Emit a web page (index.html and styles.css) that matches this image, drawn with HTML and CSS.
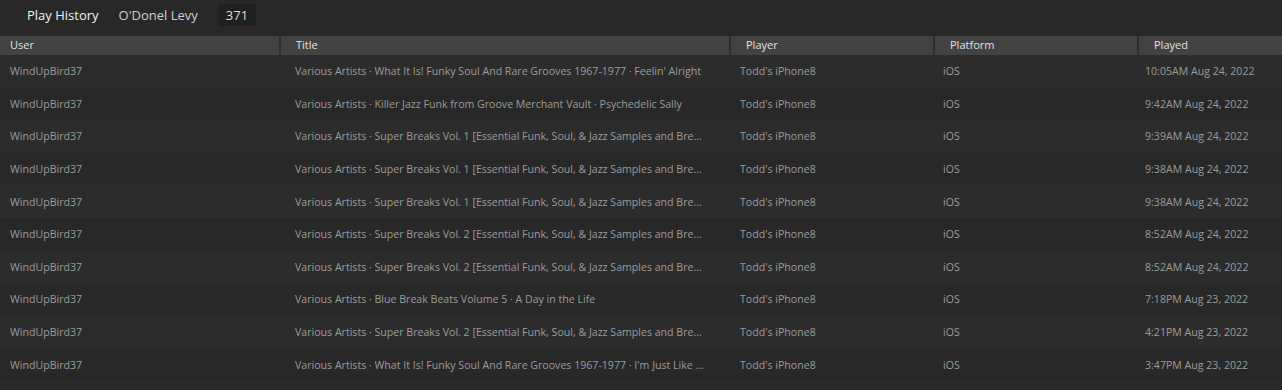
FILE: index.html
```html
<!DOCTYPE html>
<html>
<head>
<meta charset="utf-8">
<link rel="stylesheet" href="styles.css">
</head>
<body>
<div class="topbar">
  <span class="title">Play History</span>
  <span class="user">O'Donel Levy</span>
  <span class="count">371</span>
</div>
<div class="thead">
  <div class="th first">User</div>
  <div class="th">Title</div>
  <div class="th">Player</div>
  <div class="th">Platform</div>
  <div class="th">Played</div>
</div>
<div class="tbody">
  <div class="tr"><div class="td">WindUpBird37</div><div class="td">Various Artists · What It Is! Funky Soul And Rare Grooves 1967-1977 · Feelin' Alright</div><div class="td">Todd's iPhone8</div><div class="td">iOS</div><div class="td">10:05AM Aug 24, 2022</div></div>
  <div class="tr"><div class="td">WindUpBird37</div><div class="td">Various Artists · Killer Jazz Funk from Groove Merchant Vault · Psychedelic Sally</div><div class="td">Todd's iPhone8</div><div class="td">iOS</div><div class="td">9:42AM Aug 24, 2022</div></div>
  <div class="tr"><div class="td">WindUpBird37</div><div class="td">Various Artists · Super Breaks Vol. 1 [Essential Funk, Soul, &amp; Jazz Samples and Breaks]</div><div class="td">Todd's iPhone8</div><div class="td">iOS</div><div class="td">9:39AM Aug 24, 2022</div></div>
  <div class="tr"><div class="td">WindUpBird37</div><div class="td">Various Artists · Super Breaks Vol. 1 [Essential Funk, Soul, &amp; Jazz Samples and Breaks]</div><div class="td">Todd's iPhone8</div><div class="td">iOS</div><div class="td">9:38AM Aug 24, 2022</div></div>
  <div class="tr"><div class="td">WindUpBird37</div><div class="td">Various Artists · Super Breaks Vol. 1 [Essential Funk, Soul, &amp; Jazz Samples and Breaks]</div><div class="td">Todd's iPhone8</div><div class="td">iOS</div><div class="td">9:38AM Aug 24, 2022</div></div>
  <div class="tr"><div class="td">WindUpBird37</div><div class="td">Various Artists · Super Breaks Vol. 2 [Essential Funk, Soul, &amp; Jazz Samples and Breaks]</div><div class="td">Todd's iPhone8</div><div class="td">iOS</div><div class="td">8:52AM Aug 24, 2022</div></div>
  <div class="tr"><div class="td">WindUpBird37</div><div class="td">Various Artists · Super Breaks Vol. 2 [Essential Funk, Soul, &amp; Jazz Samples and Breaks]</div><div class="td">Todd's iPhone8</div><div class="td">iOS</div><div class="td">8:52AM Aug 24, 2022</div></div>
  <div class="tr"><div class="td">WindUpBird37</div><div class="td">Various Artists · Blue Break Beats Volume 5 · A Day in the Life</div><div class="td">Todd's iPhone8</div><div class="td">iOS</div><div class="td">7:18PM Aug 23, 2022</div></div>
  <div class="tr"><div class="td">WindUpBird37</div><div class="td">Various Artists · Super Breaks Vol. 2 [Essential Funk, Soul, &amp; Jazz Samples and Breaks]</div><div class="td">Todd's iPhone8</div><div class="td">iOS</div><div class="td">4:21PM Aug 23, 2022</div></div>
  <div class="tr"><div class="td">WindUpBird37</div><div class="td">Various Artists · What It Is! Funky Soul And Rare Grooves 1967-1977 · I'm Just Like You</div><div class="td">Todd's iPhone8</div><div class="td">iOS</div><div class="td">3:47PM Aug 23, 2022</div></div>
</div>
</body>
</html>
```
FILE: styles.css
```css
html, body {
  margin: 0;
  padding: 0;
  background: #2a2a2a;
  font-family: "Open Sans", "Noto Sans", sans-serif;
  overflow: hidden;
}
.topbar {
  height: 35px;
  display: flex;
  align-items: center;
  padding-left: 27px;
  background: #282828;
  box-sizing: border-box;
  padding-bottom: 5px;
}
.topbar .title {
  color: #f2f2f2;
  font-size: 13px;
  margin-right: 20px;
}
.topbar .user {
  color: #cfcfcf;
  font-size: 13px;
  margin-right: 20px;
}
.topbar .count {
  color: #dcdcdc;
  font-size: 13px;
  background: #202020;
  border-radius: 3px;
  padding: 2px 8px;
  line-height: 18px;
}
.thead {
  margin-top: 1px;
  display: grid;
  grid-template-columns: 279px 448px 202px 202px 1fr;
  column-gap: 2px;
  background: #2e2e2e;
  height: 19px;
}
.th {
  background: #424242;
  color: #e2e2e2;
  font-size: 11px;
  line-height: 18px;
  padding-left: 15px;
}
.th.first {
  padding-left: 10px;
}
.tbody {
  display: flex;
  flex-direction: column;
}
.tr {
  display: grid;
  grid-template-columns: 285px 445px 203px 202px 1fr;
  height: 32.6px;
  align-items: center;
}
.tr:nth-child(odd) {
  background: #2c2c2c;
}
.tr:nth-child(even) {
  background: #282828;
}
.td {
  color: #9c9c9c;
  font-size: 10.6px;
  padding-left: 10px;
  padding-right: 24px;
  white-space: nowrap;
  overflow: hidden;
  text-overflow: ellipsis;
}
```
